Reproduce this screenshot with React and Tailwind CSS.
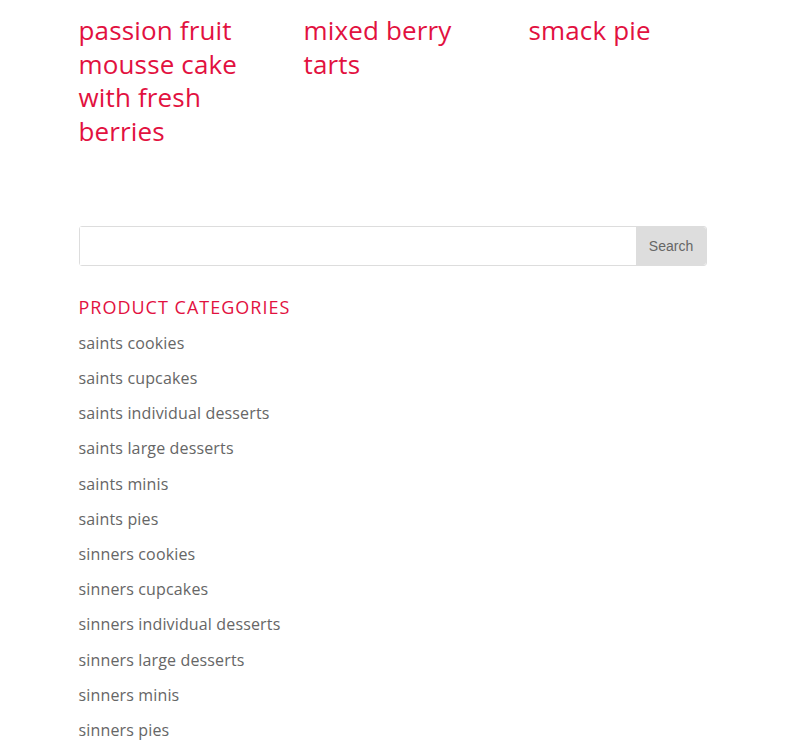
import React from "react";

const products = [
  "passion fruit mousse cake with fresh berries",
  "mixed berry tarts",
  "smack pie",
];

const categories = [
  "saints cookies",
  "saints cupcakes",
  "saints individual desserts",
  "saints large desserts",
  "saints minis",
  "saints pies",
  "sinners cookies",
  "sinners cupcakes",
  "sinners individual desserts",
  "sinners large desserts",
  "sinners minis",
  "sinners pies",
];

const App = () => {
  return (
    <div className="min-h-[748px] bg-white font-['Open_Sans',sans-serif]">
      <div className="mx-auto w-[628px] pt-[14px]">
        <ul className="grid grid-cols-[190px_190px_178px] gap-x-[35px]">
          {products.map((name) => (
            <li key={name}>
              <a href="#" className="block text-[26px] leading-[33.7px] tracking-[0.15px] text-[#e2113f]">
                {name}
              </a>
            </li>
          ))}
        </ul>

        <form className="mt-[77px] flex h-10 rounded-[3px] border border-[#ddd]" onSubmit={(e) => e.preventDefault()}>
          <input type="text" className="min-w-0 flex-1 bg-white px-3 outline-none" />
          <button
            type="submit"
            className="w-[70px] rounded-r-[3px] bg-[#ddd] pt-[1px] pl-[1px] font-['Liberation_Sans',sans-serif] text-[14px] text-[#666]"
          >
            Search
          </button>
        </form>

        <h4 className="mt-[30px] text-[18px] leading-[22px] tracking-[1px] text-[#e2113f] uppercase">
          Product Categories
        </h4>

        <ul className="mt-[8px]">
          {categories.map((c) => (
            <li key={c} className="text-[16px] leading-[35.2px] tracking-[0.15px] text-[#666]">
              <a href="#">{c}</a>
            </li>
          ))}
        </ul>
      </div>
    </div>
  );
};

export default App;
